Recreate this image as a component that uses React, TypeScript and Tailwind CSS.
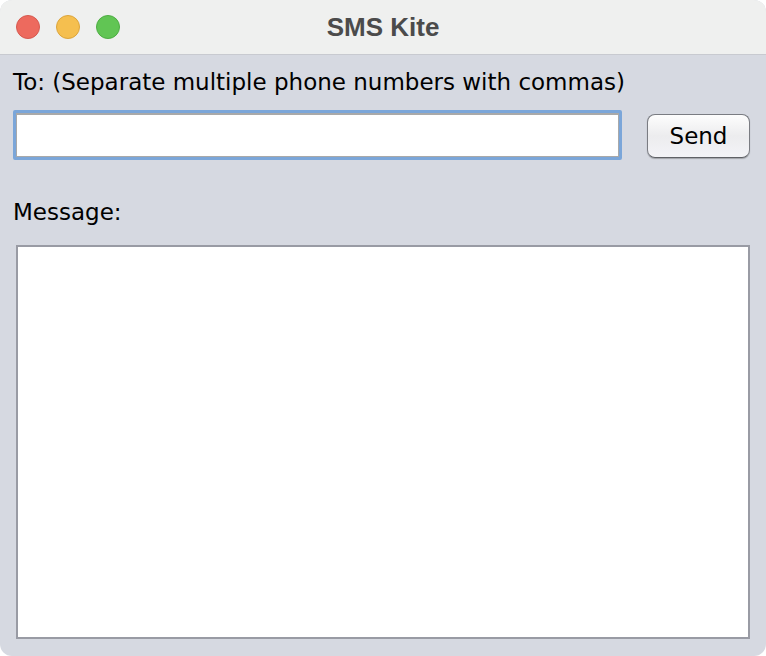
export default function App() {
  return (
    <div className="w-[766px] h-[656px] bg-white">
      <div className="w-full h-full rounded-[12px] overflow-hidden flex flex-col bg-[#d6d9e1]" style={{ fontFamily: '"DejaVu Sans", sans-serif' }}>
        {/* title bar */}
        <div className="relative h-[55px] shrink-0 bg-[#eff0ef] border-b border-[#c8cad0] flex items-center">
          <div className="flex gap-[16px] pl-[16px]">
            <span className="w-[24px] h-[24px] rounded-full bg-[#ed6a5e] border border-[#d65a50]" />
            <span className="w-[24px] h-[24px] rounded-full bg-[#f5bf4f] border border-[#dca53c]" />
            <span className="w-[24px] h-[24px] rounded-full bg-[#61c554] border border-[#4ead43]" />
          </div>
          <div
            className="absolute inset-0 flex items-center justify-center text-[26px] font-bold text-[#4b4b4b] pointer-events-none"
            style={{ fontFamily: '"Liberation Sans", Arial, sans-serif' }}
          >
            SMS Kite
          </div>
        </div>

        {/* content */}
        <div className="flex-1 flex flex-col px-[13px] pt-[13px] pb-[17px] text-black">
          <div className="text-[23px] leading-[28px] whitespace-nowrap">To: (Separate multiple phone numbers with commas)</div>
          <div className="flex items-start mt-[14px]">
            <div className="w-[609px] h-[50px] border-[3px] border-[#7ba6d9] rounded-[2px]">
              <div className="w-full h-full border-t-2 border-l border-r border-b border-[#a9a9a9] bg-white" />
            </div>
            <button className="mt-[4px] ml-[25px] w-[103px] h-[44px] rounded-[8px] border border-[#7a7c82] border-b-[#5f6166] bg-gradient-to-b from-[#fdfdfd] via-[#ececee] to-[#f3f3f7] shadow-[0_1px_1px_rgba(0,0,0,0.25)] text-[23px] leading-none text-black">
              Send
            </button>
          </div>
          <div className="text-[23px] leading-[28px] mt-[38px]">Message:</div>
          <div className="flex-1 mt-[19px] ml-[3px] mr-[3px] border-2 border-[#999ba4] bg-white" />
        </div>
      </div>
    </div>
  );
}
